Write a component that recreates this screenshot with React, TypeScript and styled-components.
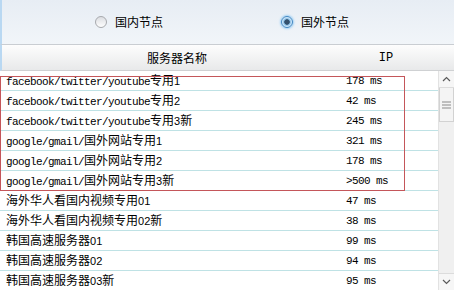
import React from 'react';
import styled, { createGlobalStyle } from 'styled-components';

const GlobalStyle = createGlobalStyle`
  html, body {
    margin: 0;
    padding: 0;
    background: #fff;
    overflow: hidden;
  }
`;

const Panel = styled.div`
  position: relative;
  width: 454px;
  height: 295px;
  font-family: "Noto Sans CJK SC", "Liberation Sans", sans-serif;
  font-size: 12px;
  color: #000;
  background: #fff;
`;

const RadioBar = styled.div`
  height: 44px;
  display: flex;
  align-items: center;
  gap: 118px;
  padding-left: 93px;
  border-left: 2px solid #b9d8f2;
  border-bottom: 1px solid #c9cdd2;
  background: linear-gradient(#e7edf4, #f1f5f9);
`;

const RadioOption = styled.label`
  display: flex;
  align-items: center;
  gap: 8px;
  font-size: 12px;
  line-height: 14px;
  cursor: pointer;
`;

const RadioCircle = styled.span<{ $checked: boolean }>`
  width: 12px;
  height: 12px;
  border-radius: 50%;
  box-sizing: border-box;
  border: 1px solid ${({ $checked }) => ($checked ? '#3f86c2' : '#a7a9ad')};
  background: ${({ $checked }) =>
    $checked
      ? 'radial-gradient(circle, #33506d 0 2.4px, #7fb6df 3px, #cfe8fa 4.5px)'
      : 'linear-gradient(#dcdee2, #fdfdfd)'};
  box-shadow: ${({ $checked }) => ($checked ? '0 0 2px 1px #9fd0f4' : 'none')};
`;

const HeaderRow = styled.div`
  height: 25px;
  display: grid;
  grid-template-columns: 350px 68px;
  align-items: center;
  border-left: 2px solid #b9d8f2;
  border-bottom: 1px solid #cfd1d3;
  background: linear-gradient(#fdfdfd, #e8e9ea);
`;

const HeaderCell = styled.div<{ $mono?: boolean }>`
  text-align: center;
  font-family: ${({ $mono }) =>
    $mono ? '"Liberation Mono", monospace' : '"Noto Sans CJK SC", sans-serif'};
  font-size: 12px;
  line-height: 14px;
`;

const ListArea = styled.div`
  display: flex;
  height: 219px;
`;

const Rows = styled.div`
  width: 438px;
`;

const Row = styled.div`
  height: 19px;
  display: grid;
  grid-template-columns: 340px 1fr;
  align-items: center;
  border-bottom: 1px solid #bfe2e5;

  &:last-child {
    border-bottom: none;
  }
`;

const NameCell = styled.div`
  padding-left: 6px;
  white-space: nowrap;
  line-height: 14px;
`;

const IpCell = styled.div`
  padding-left: 6px;
  font-family: "Liberation Mono", monospace;
  font-size: 11px;
  letter-spacing: -0.6px;
  line-height: 14px;
`;

const Latin = styled.span`
  font-family: "Liberation Mono", monospace;
  font-size: 11px;
  letter-spacing: -0.6px;
`;

const Digits = styled.span`
  font-family: "Liberation Sans", sans-serif;
  font-size: 11px;
`;

const Scrollbar = styled.div`
  width: 16px;
  display: flex;
  flex-direction: column;
  background: #f0f0f0;
  border-left: 1px solid #e2e2e2;
  box-sizing: border-box;
`;

const ScrollButton = styled.div`
  height: 17px;
  display: flex;
  align-items: center;
  justify-content: center;
  background: #f6f6f6;
  border-bottom: 1px solid #dcdcdc;
  box-sizing: border-box;

  &:last-child {
    border-bottom: none;
    border-top: 1px solid #dcdcdc;
  }
`;

const Thumb = styled.div`
  height: 34px;
  display: flex;
  align-items: center;
  justify-content: center;
  background: #f4f4f4;
  border: 1px solid #d2d2d2;
  border-top: none;
  box-sizing: border-box;
`;

const Track = styled.div`
  flex: 1;
`;

const Highlight = styled.div`
  position: absolute;
  left: 0;
  top: 76px;
  width: 405px;
  height: 115px;
  box-sizing: border-box;
  border: 1px solid #c4565a;
  pointer-events: none;
`;

const servers = [
  { name: 'facebook/twitter/youtube专用1', ip: '178 ms' },
  { name: 'facebook/twitter/youtube专用2', ip: '42 ms' },
  { name: 'facebook/twitter/youtube专用3新', ip: '245 ms' },
  { name: 'google/gmail/国外网站专用1', ip: '321 ms' },
  { name: 'google/gmail/国外网站专用2', ip: '178 ms' },
  { name: 'google/gmail/国外网站专用3新', ip: '>500 ms' },
  { name: '海外华人看国内视频专用01', ip: '47 ms' },
  { name: '海外华人看国内视频专用02新', ip: '38 ms' },
  { name: '韩国高速服务器01', ip: '99 ms' },
  { name: '韩国高速服务器02', ip: '94 ms' },
  { name: '韩国高速服务器03新', ip: '95 ms' },
];

function renderName(text: string) {
  const parts = text.match(/[A-Za-z/ ]+|[0-9]+|[^A-Za-z/ 0-9]+/g) || [];
  return parts.map((part, i) => {
    if (/^[A-Za-z/ ]+$/.test(part)) return <Latin key={i}>{part}</Latin>;
    if (/^[0-9]+$/.test(part)) return <Digits key={i}>{part}</Digits>;
    return <span key={i}>{part}</span>;
  });
}

function Chevron({ up }: { up: boolean }) {
  return (
    <svg width="9" height="6" viewBox="0 0 9 6">
      <polyline
        points={up ? '1,5 4.5,1.5 8,5' : '1,1 4.5,4.5 8,1'}
        fill="none"
        stroke="#5a5a5a"
        strokeWidth="1.2"
      />
    </svg>
  );
}

function Grip() {
  return (
    <svg width="9" height="8" viewBox="0 0 9 8">
      <line x1="0" y1="1" x2="9" y2="1" stroke="#8a8a8a" />
      <line x1="0" y1="4" x2="9" y2="4" stroke="#8a8a8a" />
      <line x1="0" y1="7" x2="9" y2="7" stroke="#8a8a8a" />
    </svg>
  );
}

export default function App() {
  const [region, setRegion] = React.useState<'cn' | 'intl'>('intl');

  return (
    <Panel>
      <GlobalStyle />
      <RadioBar>
        <RadioOption onClick={() => setRegion('cn')}>
          <RadioCircle $checked={region === 'cn'} />
          国内节点
        </RadioOption>
        <RadioOption onClick={() => setRegion('intl')}>
          <RadioCircle $checked={region === 'intl'} />
          国外节点
        </RadioOption>
      </RadioBar>

      <HeaderRow>
        <HeaderCell>服务器名称</HeaderCell>
        <HeaderCell $mono>IP</HeaderCell>
      </HeaderRow>

      <ListArea>
        <Rows>
          {servers.map((s) => (
            <Row key={s.name}>
              <NameCell>{renderName(s.name)}</NameCell>
              <IpCell>{s.ip}</IpCell>
            </Row>
          ))}
        </Rows>
        <Scrollbar>
          <ScrollButton>
            <Chevron up />
          </ScrollButton>
          <Thumb>
            <Grip />
          </Thumb>
          <Track />
          <ScrollButton>
            <Chevron up={false} />
          </ScrollButton>
        </Scrollbar>
      </ListArea>

      <Highlight />
    </Panel>
  );
}
